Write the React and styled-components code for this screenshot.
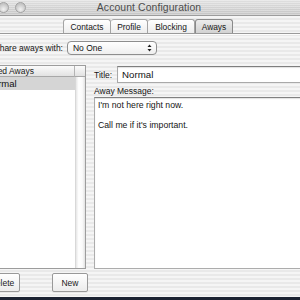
import React from "react";
import styled, { createGlobalStyle } from "styled-components";

const GlobalStyle = createGlobalStyle`
  html, body {
    margin: 0;
    padding: 0;
    background: #1b2231;
  }
  body {
    font-family: "Liberation Sans", Arial, sans-serif;
    overflow: hidden;
  }
`;

const Window = styled.div`
  width: 300px;
  height: 300px;
  display: flex;
  flex-direction: column;
  overflow: hidden;
  background: repeating-linear-gradient(
    #f5f5f5 0px,
    #f5f5f5 2px,
    #e9e9e9 2px,
    #e9e9e9 4px
  );
`;

const TitleBar = styled.div`
  height: 15px;
  flex: none;
  display: flex;
  align-items: center;
  border-bottom: 1px solid #9c9c9c;
  background: repeating-linear-gradient(
      rgba(255, 255, 255, 0.25) 0px,
      rgba(255, 255, 255, 0.25) 1px,
      rgba(0, 0, 0, 0.02) 1px,
      rgba(0, 0, 0, 0.02) 2px
    ),
    linear-gradient(#e4e4e4, #c9c9c9);
`;

const Lights = styled.div`
  display: flex;
  gap: 6px;
  margin-left: -2px;
  width: 40px;
`;

const Light = styled.span`
  width: 11px;
  height: 11px;
  border-radius: 50%;
  box-sizing: border-box;
  border: 1px solid #a2a2a2;
  background: radial-gradient(circle at 50% 70%, #f2f2f2, #c4c4c4 70%);
`;

const Title = styled.div`
  flex: 1;
  text-align: center;
  margin-right: 40px;
  font-size: 10.4px;
  color: #4c4c4c;
  letter-spacing: 0.1px;
`;

const TabBar = styled.div`
  margin-top: 3px;
  height: 14px;
  flex: none;
  display: flex;
  padding-left: 63px;
  border-bottom: 1px solid #9a9a9a;
  box-shadow: 0 1px 0 #fdfdfd;
`;

const Tab = styled.div`
  width: ${(p) => p.$w}px;
  box-sizing: border-box;
  display: flex;
  align-items: center;
  justify-content: center;
  font-size: 8.4px;
  color: #161616;
  border: 1px solid ${(p) => (p.$active ? "#8a8a8a" : "#a4a4a4")};
  border-bottom: none;
  border-left-width: ${(p) => (p.$first || p.$active ? 1 : 0)}px;
  border-radius: 3px 3px 0 0;
  background: ${(p) =>
    p.$active
      ? "linear-gradient(#ececec, #d2d2d2)"
      : "linear-gradient(#ffffff, #ededed)"};
`;

const ShareRow = styled.div`
  margin-top: 6px;
  height: 15px;
  flex: none;
  display: flex;
  align-items: center;
  gap: 4px;
  margin-left: -6px;
`;

const Label = styled.span`
  font-size: 8.5px;
  color: #161616;
  white-space: nowrap;
`;

const Popup = styled.div`
  width: 90px;
  height: 14px;
  box-sizing: border-box;
  display: flex;
  align-items: center;
  justify-content: space-between;
  padding: 0 4px 0 5px;
  border: 1px solid #8e8e8e;
  border-radius: 4px;
  background: linear-gradient(#ffffff, #efefef);
  font-size: 8.5px;
  color: #111;
`;

const Main = styled.div`
  margin-top: 10px;
  height: 204px;
  flex: none;
  display: flex;
  gap: 8px;
`;

const ListPanel = styled.div`
  margin-left: -20px;
  width: 106px;
  flex: none;
  box-sizing: border-box;
  border: 1px solid #9c9c9c;
  background: #fff;
  display: grid;
  grid-template-columns: 1fr 10px;
  grid-template-rows: 11px 1fr;
`;

const HeaderCell = styled.div`
  display: flex;
  align-items: center;
  padding-left: 2px;
  font-size: 8.5px;
  color: #1a1a1a;
  white-space: nowrap;
  background: linear-gradient(#fbfbfb, #e2e2e2);
  border-bottom: 1px solid #a8a8a8;
  border-right: ${(p) => (p.$corner ? "none" : "1px solid #b4b4b4")};
`;

const Rows = styled.div`
  display: flex;
  flex-direction: column;
`;

const Row = styled.div`
  height: 13px;
  display: flex;
  align-items: center;
  padding-left: 5px;
  font-size: 9.5px;
  color: #111;
  background: ${(p) => (p.$selected ? "#d5d5d5" : "transparent")};
`;

const ScrollTrack = styled.div`
  border-left: 1px solid #d8d8d8;
  background: linear-gradient(90deg, #e6e6e6, #ffffff 30%, #fafafa 70%, #e2e2e2);
`;

const Editor = styled.div`
  flex: 1;
  display: flex;
  flex-direction: column;
  min-width: 0;
`;

const TitleRow = styled.div`
  margin-top: 1px;
  height: 17px;
  display: flex;
  align-items: center;
  gap: 5px;
`;

const TextField = styled.div`
  flex: 1;
  height: 17px;
  box-sizing: border-box;
  margin-right: -10px;
  display: flex;
  align-items: center;
  padding-left: 4px;
  border: 1px solid #a9a9a9;
  border-top-color: #7e7e7e;
  background: #fff;
  box-shadow: inset 0 1px 1px rgba(0, 0, 0, 0.12);
  font-size: 9.7px;
  color: #111;
`;

const MessageLabel = styled(Label)`
  margin-top: 3px;
  height: 11px;
  line-height: 11px;
`;

const TextArea = styled.div`
  flex: 1;
  margin-right: -10px;
  box-sizing: border-box;
  padding: 2px 3px;
  border: 1px solid #acacac;
  border-top-color: #808080;
  background: #fff;
  box-shadow: inset 0 1px 1px rgba(0, 0, 0, 0.12);
  font-size: 8.7px;
  line-height: 10px;
  color: #151515;
`;

const Footer = styled.div`
  margin-top: 4px;
  height: 19px;
  flex: none;
  display: flex;
  gap: 32px;
  margin-left: -16px;
`;

const Button = styled.div`
  width: 36px;
  box-sizing: border-box;
  display: flex;
  align-items: center;
  justify-content: center;
  border: 1px solid #999;
  border-radius: 2px;
  background: linear-gradient(#ffffff, #ececec);
  box-shadow: 0 1px 0 rgba(0, 0, 0, 0.06);
  font-size: 8.5px;
  color: #1a1a1a;
`;

const Desktop = styled.div`
  margin-top: auto;
  height: 3px;
  flex: none;
  background: #1b2231;
`;

function Arrows() {
  return (
    <svg width="5" height="8" viewBox="0 0 5 8">
      <path d="M2.5 0.5 L4.5 3 H0.5 Z" fill="#222" />
      <path d="M2.5 7.5 L4.5 5 H0.5 Z" fill="#222" />
    </svg>
  );
}

const tabs = [
  { name: "Contacts", w: 48 },
  { name: "Profile", w: 37 },
  { name: "Blocking", w: 47 },
  { name: "Aways", w: 38, active: true },
];

export default function App() {
  return (
    <>
      <GlobalStyle />
      <Window>
        <TitleBar>
          <Lights>
            <Light />
            <Light />
          </Lights>
          <Title>Account Configuration</Title>
        </TitleBar>

        <TabBar>
          {tabs.map((t, i) => (
            <Tab key={t.name} $w={t.w} $active={t.active} $first={i === 0}>
              {t.name}
            </Tab>
          ))}
        </TabBar>

        <ShareRow>
          <Label>Share aways with:</Label>
          <Popup>
            <span>No One</span>
            <Arrows />
          </Popup>
        </ShareRow>

        <Main>
          <ListPanel>
            <HeaderCell>Saved Aways</HeaderCell>
            <HeaderCell $corner />
            <Rows>
              <Row $selected>Normal</Row>
            </Rows>
            <ScrollTrack />
          </ListPanel>

          <Editor>
            <TitleRow>
              <Label>Title:</Label>
              <TextField>Normal</TextField>
            </TitleRow>
            <MessageLabel>Away Message:</MessageLabel>
            <TextArea>
              I'm not here right now.
              <br />
              <br />
              Call me if it's important.
            </TextArea>
          </Editor>
        </Main>

        <Footer>
          <Button>Delete</Button>
          <Button>New</Button>
        </Footer>

        <Desktop />
      </Window>
    </>
  );
}
